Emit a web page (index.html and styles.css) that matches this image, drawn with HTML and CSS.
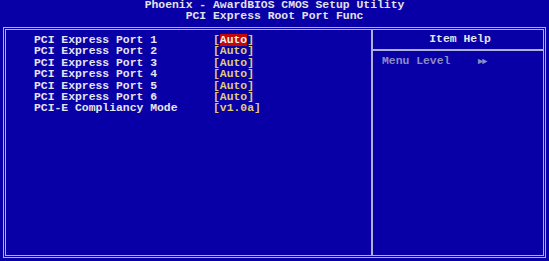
FILE: index.html
```html
<!DOCTYPE html>
<html>
	<head>
		<meta charset="UTF-8">
		<title>PCI Express Root Port Func</title>
		<link rel="stylesheet" href="styles.css">
	</head>
	<body>
		<div class="head">
			<div>Phoenix - AwardBIOS CMOS Setup Utility</div>
			<div>PCI Express Root Port Func</div>
		</div>
		<div class="box">
			<div class="items">
				<div class="row"><span class="lbl">PCI Express Port 1</span><span class="val">[<em class="ac">Auto</em>]</span></div>
				<div class="row"><span class="lbl">PCI Express Port 2</span><span class="val">[Auto]</span></div>
				<div class="row"><span class="lbl">PCI Express Port 3</span><span class="val">[Auto]</span></div>
				<div class="row"><span class="lbl">PCI Express Port 4</span><span class="val">[Auto]</span></div>
				<div class="row"><span class="lbl">PCI Express Port 5</span><span class="val">[Auto]</span></div>
				<div class="row"><span class="lbl">PCI Express Port 6</span><span class="val">[Auto]</span></div>
				<div class="row"><span class="lbl">PCI-E Compliancy Mode</span><span class="val">[v1.0a]</span></div>
			</div>
			<div class="help">
				<div class="help-title">Item Help</div>
				<div class="help-body">Menu Level &nbsp;&nbsp;&nbsp;<span class="arr">&#9658;&#9658;</span></div>
			</div>
		</div>
	</body>
</html>
```
FILE: styles.css
```css
* {margin:0; padding:0;}
body {background:#0800a6; font-family:"Liberation Mono","DejaVu Sans Mono",monospace; font-size:11.4px; line-height:11.4px; font-weight:bold; color:#e6e6ee; width:549px; height:261px; overflow:hidden;}

.head {text-align:center; height:23px; color:#e2e2ea;}

.box {margin:4px 3px 0 3px; width:537px; height:225px; border:3px double #b0b0dc; display:grid; grid-template-columns:365px 1fr;}

.items {padding:5px 0 0 28px;}
.row {display:grid; grid-template-columns:179px auto;}
.val {color:#e0cc78;}
.ac {font-style:normal; background:#c40808; color:#f4f0f0;}

.help {border-left:2px solid #b0b0dc;}
.help-title {height:19px; line-height:19px; text-align:center; border-bottom:2px solid #b0b0dc; padding-left:4px;}
.help-body {padding:5px 0 0 9px; color:#8c8cc4;}
.arr {font-size:9px; letter-spacing:-1px;}
```
